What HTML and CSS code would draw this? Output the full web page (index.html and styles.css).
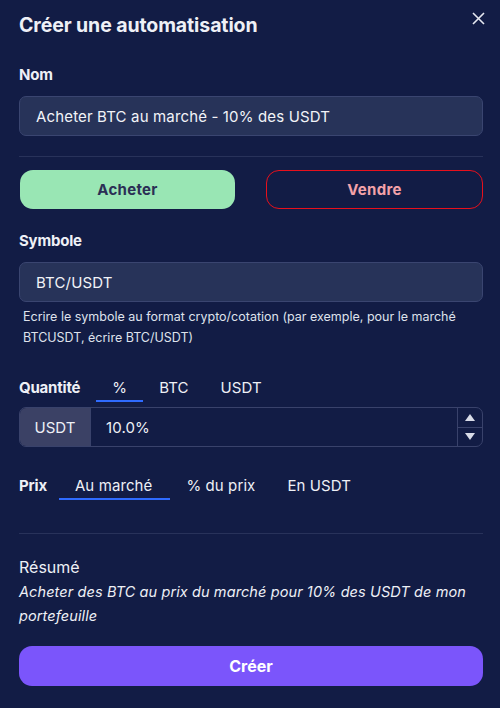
FILE: index.html
```html
<!DOCTYPE html>
<html lang="fr">
  <head>
    <meta charset="UTF-8" />
    <meta name="viewport" content="width=device-width, initial-scale=1.0" />
    <title>Créer une automatisation</title>
    <link rel="stylesheet" href="styles.css">
  </head>
  <body>
    <div class="modal">
      <div class="modal-header">
        <h2>Créer une automatisation</h2>
        <button class="close-btn" aria-label="Fermer">
          <svg width="13" height="13" viewBox="0 0 13 13">
            <path d="M1 1 L12 12 M12 1 L1 12" stroke="#e6e8f0" stroke-width="1.6" fill="none" />
          </svg>
        </button>
      </div>

      <label class="field-label">Nom</label>
      <div class="text-input">Acheter BTC au marché - 10% des USDT</div>

      <hr class="divider" />

      <div class="side-row">
        <button class="side-btn buy">Acheter</button>
        <button class="side-btn sell">Vendre</button>
      </div>

      <label class="field-label">Symbole</label>
      <div class="text-input">BTC/USDT</div>
      <p class="hint">
        Ecrire le symbole au format crypto/cotation (par exemple, pour le marché
        BTCUSDT, écrire BTC/USDT)
      </p>

      <div class="tab-row qty-row">
        <span class="tab-label">Quantité</span>
        <span class="tab active">%</span>
        <span class="tab">BTC</span>
        <span class="tab">USDT</span>
      </div>
      <div class="input-group">
        <span class="addon">USDT</span>
        <span class="number-value">10.0%</span>
        <span class="spinner">
          <span class="spin up"></span>
          <span class="spin down"></span>
        </span>
      </div>

      <div class="tab-row price-row">
        <span class="tab-label">Prix</span>
        <span class="tab active">Au marché</span>
        <span class="tab">% du prix</span>
        <span class="tab">En USDT</span>
      </div>

      <hr class="divider" />

      <h3 class="summary-title">Résumé</h3>
      <p class="summary">
        Acheter des BTC au prix du marché pour 10% des USDT de mon portefeuille
      </p>

      <button class="create-btn">Créer</button>
    </div>
  </body>
</html>
```

FILE: styles.css
```css
* {
  margin: 0;
  padding: 0;
  box-sizing: border-box;
}
body {
  font-family: "Inter", "Noto Sans", sans-serif;
  background: #121c45;
  color: #eef0f6;
  width: 500px;
  height: 708px;
  overflow: hidden;
}
.modal {
  padding: 12px 17px 0 19px;
  display: flex;
  flex-direction: column;
}
.modal-header {
  display: flex;
  justify-content: space-between;
  align-items: flex-start;
}
h2 {
  font-size: 19.5px;
  font-weight: 700;
  letter-spacing: -0.1px;
  line-height: 26px;
  color: #eef0f6;
}
.close-btn {
  background: none;
  border: none;
  margin-right: -2px;
  cursor: pointer;
}
.field-label {
  display: block;
  font-size: 15px;
  font-weight: 700;
  letter-spacing: -0.2px;
  line-height: 20px;
  margin-top: 27px;
  margin-bottom: 11px;
}
.text-input {
  height: 40px;
  background: #273359;
  border: 1px solid #3a4570;
  border-radius: 7px;
  padding: 0 16px;
  display: flex;
  align-items: center;
  font-size: 15px;
  letter-spacing: 0.15px;
  color: #f2f3f8;
}
.divider {
  border: none;
  border-top: 1px solid #28325a;
  margin-top: 20px;
}
.side-row {
  display: flex;
  justify-content: space-between;
  margin-top: 13px;
}
.side-btn {
  width: 215px;
  height: 39px;
  border-radius: 13px;
  font-family: inherit;
  font-size: 15px;
  font-weight: 700;
  letter-spacing: 0.3px;
  cursor: pointer;
}
.buy {
  background: #99e6b4;
  border: none;
  color: #2b2f55;
  margin-left: 1px;
}
.sell {
  background: transparent;
  border: 1px solid #e8101c;
  color: #f3a2a9;
  width: 217px;
}
.side-row + .field-label {
  margin-top: 22px;
}
.hint {
  font-size: 12.5px;
  line-height: 21px;
  color: #dfe2ec;
  margin-top: 4px;
  padding-left: 4px;
}
.tab-row {
  display: flex;
  align-items: flex-end;
  font-size: 15px;
  letter-spacing: 0.1px;
}
.qty-row {
  margin-top: 28px;
}
.tab-label {
  font-weight: 700;
  letter-spacing: -0.2px;
  line-height: 24px;
  padding-bottom: 2px;
  margin-right: 16px;
}
.tab {
  padding: 0 16px;
  line-height: 24px;
  border-bottom: 2px solid transparent;
}
.tab.active {
  border-bottom-color: #2f6bff;
}
.price-row .tab-label {
  margin-right: 12px;
}
.price-row .tab.active {
  padding-right: 18px;
}
.input-group {
  display: flex;
  height: 40px;
  margin-top: 5px;
  border: 1px solid #39426b;
  border-radius: 7px;
  overflow: hidden;
}
.addon {
  width: 71px;
  background: #3b4165;
  display: flex;
  align-items: center;
  justify-content: center;
  font-size: 15px;
  border-right: 1px solid #39426b;
}
.number-value {
  flex: 1;
  display: flex;
  align-items: center;
  padding-left: 15px;
  font-size: 15px;
  letter-spacing: 0.1px;
}
.spinner {
  width: 25px;
  display: flex;
  flex-direction: column;
  border-left: 1px solid #39426b;
}
.spin {
  flex: 1;
  display: flex;
  align-items: center;
  justify-content: center;
}
.spin.up {
  border-bottom: 1px solid #39426b;
}
.spin::before {
  content: "";
  border-left: 5px solid transparent;
  border-right: 5px solid transparent;
}
.spin.up::before {
  border-bottom: 7px solid #d9dce8;
}
.spin.down::before {
  border-top: 7px solid #d9dce8;
}
.price-row {
  margin-top: 27px;
}
.price-row + .divider {
  margin-top: 33px;
}
.summary-title {
  font-size: 16px;
  font-weight: 400;
  line-height: 22px;
  margin-top: 22px;
}
.summary {
  font-size: 14.5px;
  font-style: italic;
  letter-spacing: 0.1px;
  line-height: 24px;
  margin-top: 2px;
  padding-right: 10px;
}
.create-btn {
  margin-top: 18px;
  height: 40px;
  background: #7b55fb;
  border: none;
  border-radius: 13px;
  color: #fff;
  font-family: inherit;
  font-size: 16px;
  font-weight: 700;
  cursor: pointer;
}
```
